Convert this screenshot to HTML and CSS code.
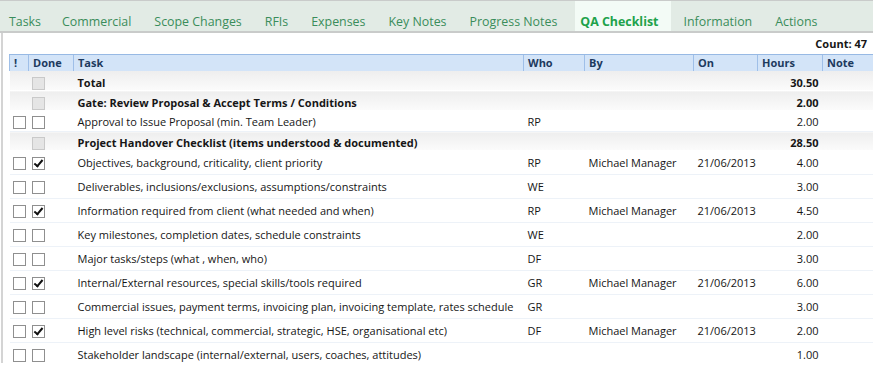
FILE: index.html
```html
<!DOCTYPE html>
<html lang="en">
<head>
    <meta charset="UTF-8">
    <title>QA Checklist</title>
    <link rel="stylesheet" href="styles.css">
</head>
<body>
    <div class="tabs">
        <span class="tab">Tasks</span>
        <span class="tab">Commercial</span>
        <span class="tab">Scope Changes</span>
        <span class="tab">RFIs</span>
        <span class="tab">Expenses</span>
        <span class="tab">Key Notes</span>
        <span class="tab">Progress Notes</span>
        <span class="tab active">QA Checklist</span>
        <span class="tab">Information</span>
        <span class="tab">Actions</span>
    </div>
    <div class="panel">
        <div class="count">Count: 47</div>
        <table class="grid">
            <colgroup>
                <col style="width:19px"><col style="width:45px"><col style="width:450px"><col style="width:61px">
                <col style="width:109px"><col style="width:64px"><col style="width:65px"><col>
            </colgroup>
            <thead>
                <tr>
                    <th>!</th><th>Done</th><th>Task</th><th>Who</th><th>By</th><th>On</th><th>Hours</th><th>Note</th>
                </tr>
            </thead>
            <tbody>
                <tr class="group">
                    <td></td><td><span class="cb off"></span></td><td>Total</td><td></td><td></td><td></td><td class="num">30.50</td><td></td>
                </tr>
                <tr class="group">
                    <td></td><td><span class="cb off"></span></td><td>Gate: Review Proposal &amp; Accept Terms / Conditions</td><td></td><td></td><td></td><td class="num">2.00</td><td></td>
                </tr>
                <tr class="item first">
                    <td><span class="cb"></span></td><td><span class="cb"></span></td><td>Approval to Issue Proposal (min. Team Leader)</td><td>RP</td><td></td><td></td><td class="num">2.00</td><td></td>
                </tr>
                <tr class="group short">
                    <td></td><td><span class="cb off"></span></td><td>Project Handover Checklist (items understood &amp; documented)</td><td></td><td></td><td></td><td class="num">28.50</td><td></td>
                </tr>
                <tr class="item">
                    <td><span class="cb"></span></td><td><span class="cb on"></span></td><td>Objectives, background, criticality, client priority</td><td>RP</td><td>Michael Manager</td><td>21/06/2013</td><td class="num">4.00</td><td></td>
                </tr>
                <tr class="item">
                    <td><span class="cb"></span></td><td><span class="cb"></span></td><td>Deliverables, inclusions/exclusions, assumptions/constraints</td><td>WE</td><td></td><td></td><td class="num">3.00</td><td></td>
                </tr>
                <tr class="item">
                    <td><span class="cb"></span></td><td><span class="cb on"></span></td><td>Information required from client (what needed and when)</td><td>RP</td><td>Michael Manager</td><td>21/06/2013</td><td class="num">4.50</td><td></td>
                </tr>
                <tr class="item">
                    <td><span class="cb"></span></td><td><span class="cb"></span></td><td>Key milestones, completion dates, schedule constraints</td><td>WE</td><td></td><td></td><td class="num">2.00</td><td></td>
                </tr>
                <tr class="item">
                    <td><span class="cb"></span></td><td><span class="cb"></span></td><td>Major tasks/steps (what , when, who)</td><td>DF</td><td></td><td></td><td class="num">3.00</td><td></td>
                </tr>
                <tr class="item">
                    <td><span class="cb"></span></td><td><span class="cb on"></span></td><td>Internal/External resources, special skills/tools required</td><td>GR</td><td>Michael Manager</td><td>21/06/2013</td><td class="num">6.00</td><td></td>
                </tr>
                <tr class="item">
                    <td><span class="cb"></span></td><td><span class="cb"></span></td><td>Commercial issues, payment terms, invoicing plan, invoicing template, rates schedule</td><td>GR</td><td></td><td></td><td class="num">3.00</td><td></td>
                </tr>
                <tr class="item">
                    <td><span class="cb"></span></td><td><span class="cb on"></span></td><td>High level risks (technical, commercial, strategic, HSE, organisational etc)</td><td>DF</td><td>Michael Manager</td><td>21/06/2013</td><td class="num">2.00</td><td></td>
                </tr>
                <tr class="item">
                    <td><span class="cb"></span></td><td><span class="cb"></span></td><td>Stakeholder landscape (internal/external, users, coaches, attitudes)</td><td></td><td></td><td></td><td class="num">1.00</td><td></td>
                </tr>
            </tbody>
        </table>
    </div>
</body>
</html>
```

FILE: styles.css
```css
body { margin: 0; font-family: "Open Sans", "Noto Sans", sans-serif; font-size: 11px; color: #161616; background: #fff; overflow: hidden; }

.tabs { display: flex; height: 33px; background: #e2ebe5; border-top: 1px solid #c9cbca; border-bottom: 2px solid #c9cbca; box-sizing: border-box; }
.tab { padding: 12px 11px 0 12px; font-size: 12.4px; color: #3a8d5b; white-space: nowrap; }
.tab:first-child { padding-left: 9px; }
.tab:nth-child(2) { padding-left: 10px; }
.tab.active { background: #f3fbf6; color: #20a24b; font-weight: bold; margin-left: 7px; padding: 12px 13px 0 5px; }

.panel { border-left: 2px solid #d4d4d4; margin-left: 1px; height: 330px; padding-left: 6px; }
.count { text-align: right; font-weight: bold; padding: 3px 6px 0 0; height: 18px; }

.grid { border-collapse: collapse; table-layout: fixed; width: 864px; }
.grid th { background: #d3e4f8; border-top: 1px solid #97b9e4; border-left: 1px solid #9fbfe8; color: #1d3a5e; font-weight: bold; text-align: left; height: 16px; padding: 0 4px; line-height: 16px; }
.grid td { padding: 0 4px; white-space: nowrap; overflow: hidden; }
.grid td:first-child, .grid td:nth-child(2) { padding-left: 3px; }
.grid .num { text-align: right; }

.group td { font-weight: bold; background: linear-gradient(#eeeeee, #fbfbfb); height: 18px; padding-top: 1px; vertical-align: bottom; border-bottom: 1px solid #fff; }
.group.short td { height: 17px; }
.item td { height: 23px; border-bottom: 1px solid #edf2f8; }
.item.first td { height: 20px; }

.cb { display: inline-block; width: 11px; height: 11px; border: 1px solid #8f8f8f; background: #fff; vertical-align: middle; position: relative; }
.cb.off { border-color: #c9c9c9; background: #e5e5e5; }
.cb.on::after { content: ""; position: absolute; left: 3px; top: 0; width: 3px; height: 7px; border: solid #111; border-width: 0 2px 2px 0; transform: rotate(40deg); }
```
